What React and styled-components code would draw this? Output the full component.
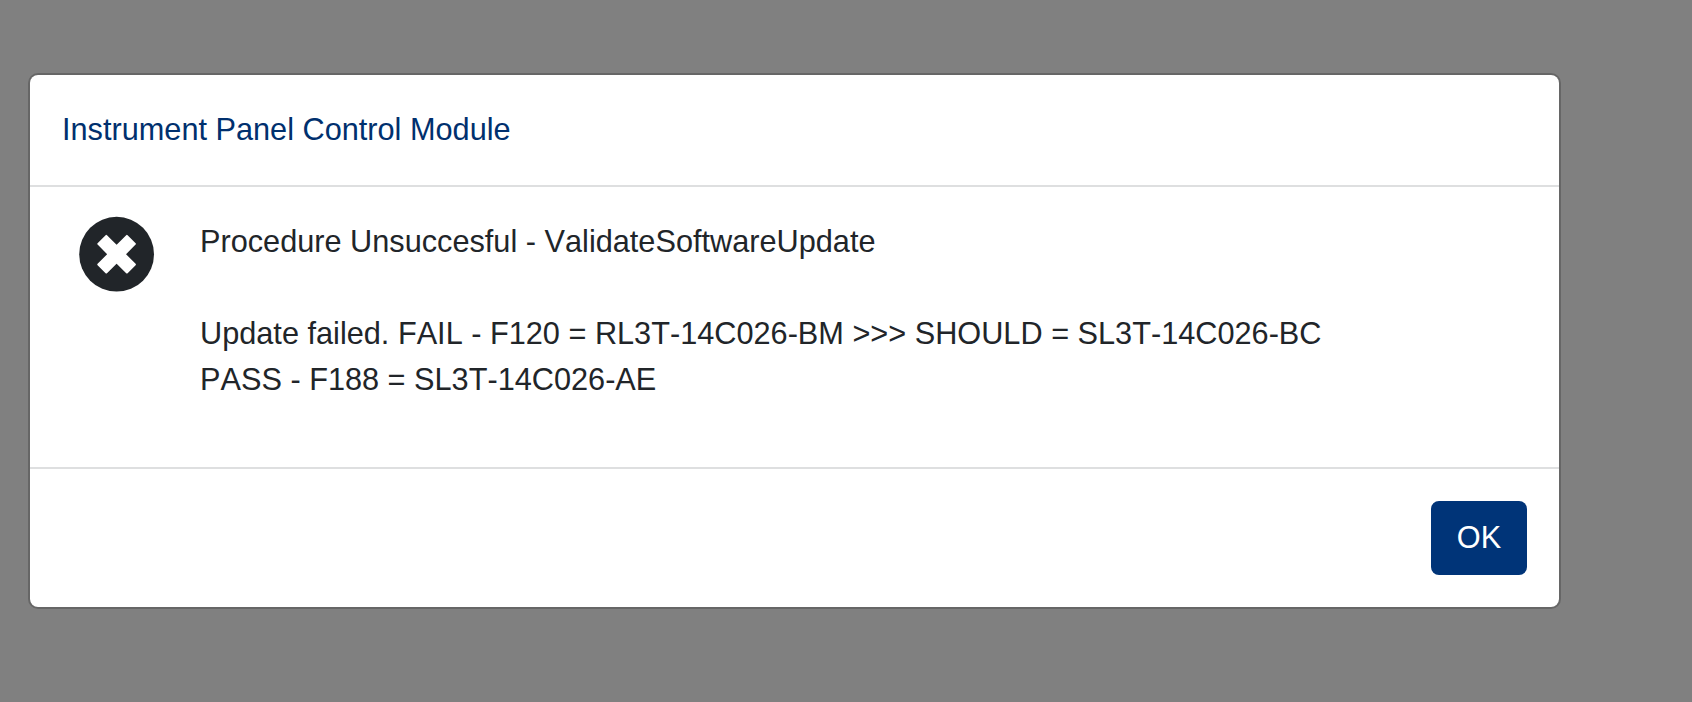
import React from "react";
import styled, { createGlobalStyle } from "styled-components";

const GlobalStyle = createGlobalStyle`
  * {
    box-sizing: border-box;
  }
  body {
    margin: 0;
    background-color: #808080;
    font-family: "Liberation Sans", Arial, sans-serif;
    font-kerning: none;
  }
`;

const Backdrop = styled.div`
  min-height: 100vh;
  padding: 73px 131px 0 28px;
  background-color: #808080;
`;

const Dialog = styled.div`
  display: flex;
  flex-direction: column;
  background-color: white;
  background-clip: padding-box;
  border: 2px solid rgba(0, 0, 0, 0.2);
  border-radius: 10px;
  font-size: 30.7px;
  line-height: 46px;
  color: #212529;
`;

const DialogHeader = styled.header`
  padding: 32px;
  border-bottom: 2px solid #dedfe0;
`;

const Title = styled.h1`
  margin: 0;
  font-size: inherit;
  font-weight: 400;
  color: #00306e;
`;

const DialogBody = styled.div`
  display: flex;
  align-items: flex-start;
  height: 280px;
  padding: 29px 32px 0 48px;
`;

const IconSvg = styled.svg`
  flex: none;
  width: 77px;
  height: 77px;
`;

const Message = styled.div`
  margin: 3px 0 0 45px;
  white-space: pre-line;
`;

const DialogFooter = styled.footer`
  display: flex;
  justify-content: flex-end;
  padding: 32px;
  border-top: 2px solid #dedfe0;
`;

const Button = styled.button`
  width: 96px;
  height: 74px;
  padding: 0;
  border: 0;
  border-radius: 8px;
  background-color: #003478;
  color: white;
  font: inherit;
  font-kerning: none;
  cursor: pointer;
`;

const message = `Procedure Unsuccesful - ValidateSoftwareUpdate

Update failed. FAIL - F120 = RL3T-14C026-BM >>> SHOULD = SL3T-14C026-BC
PASS - F188 = SL3T-14C026-AE`;

const ErrorIcon = () => (
  <IconSvg viewBox="0 0 77 77" aria-hidden="true">
    <circle cx="38.6" cy="38.2" r="37.4" fill="#212529" />
    <path
      transform="translate(38.6 38.2)"
      d="M0-8L10.3-18.3L18.3-10.3L8 0L18.3 10.3L10.3 18.3L0 8L-10.3 18.3L-18.3 10.3L-8 0L-18.3-10.3L-10.3-18.3Z"
      fill="white"
      stroke="white"
      strokeWidth="2"
      strokeLinejoin="round"
    />
  </IconSvg>
);

const App = () => (
  <Backdrop>
    <GlobalStyle />
    <Dialog role="alertdialog">
      <DialogHeader>
        <Title>Instrument Panel Control Module</Title>
      </DialogHeader>
      <DialogBody>
        <ErrorIcon />
        <Message>{message}</Message>
      </DialogBody>
      <DialogFooter>
        <Button>OK</Button>
      </DialogFooter>
    </Dialog>
  </Backdrop>
);

export default App;
